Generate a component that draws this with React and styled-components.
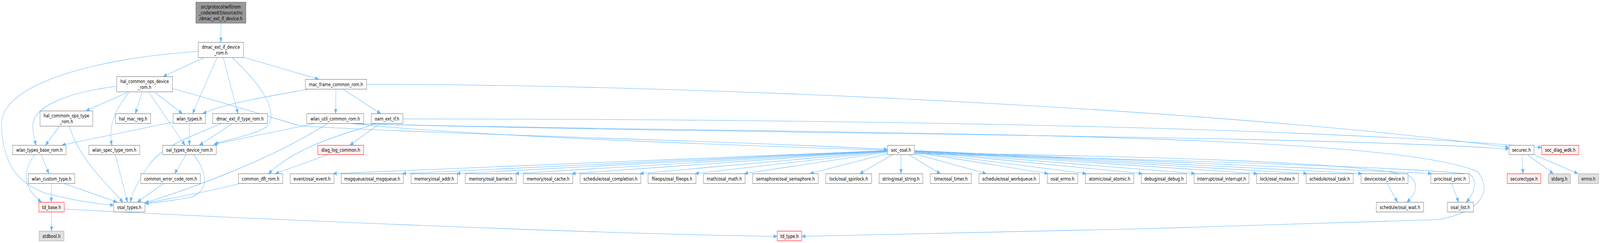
import React, { useEffect, useState } from 'react';
import styled, { createGlobalStyle } from 'styled-components';

const GRAPH_W = 5339;
const GRAPH_H = 623;

const GlobalStyle = createGlobalStyle`
    html, body {
        margin: 0;
        padding: 0;
        background: #ffffff;
        overflow: hidden;
    }
`;

// outer frame, sized to the viewport
const Frame = styled.div`
    position: relative;
    overflow: hidden;
    background: #ffffff;
`;

const Canvas = styled.div`
    position: relative;
    width: ${GRAPH_W}px;
    height: ${GRAPH_H}px;
    overflow: hidden;
    background: #ffffff;
    transform-origin: 0 0;
    font-family: "DejaVu Sans", "Liberation Sans", sans-serif;
`;

const Edges = styled.svg`
    position: absolute;
    left: 0;
    top: 0;
`;

const kinds = {
    root: { bg: '#999999', border: '#666666' },
    file: { bg: '#ffffff', border: '#666666' },
    missing: { bg: '#fff0f0', border: '#ff0000' },
    system: { bg: '#e0e0e0', border: '#999999' },
};

// graph node, placed on the dot canvas
const Node = styled.div`
    position: absolute;
    left: ${p => p.$x}px;
    top: ${p => p.$y}px;
    width: ${p => p.$w}px;
    height: ${p => p.$h}px;
    box-sizing: border-box;
    border: 1px solid ${p => kinds[p.$kind].border};
    background: ${p => kinds[p.$kind].bg};
    display: flex;
    flex-direction: column;
    align-items: center;
    justify-content: center;
    font-size: 13px;
    line-height: 15px;
    color: #000000;
    white-space: pre;
    text-align: center;
`;

const n = (x1, x2, y1, y2, label, kind = 'file') => ({ x: x1, y: y1, w: x2 - x1, h: y2 - y1, label, kind });
const row = (x1, x2, label, kind) => n(x1, x2, 445, 471, label, kind);

const nodes = {
    R: n(653, 821, 5, 60, 'src/protocol/wifi/rom\n_code/ws63/source/inc\n/dmac_ext_if_device.h', 'root'),
    DEV: n(661, 813, 108, 148, 'dmac_ext_if_device\n_rom.h'),
    HALDEV: n(389, 576, 196, 236, 'hal_common_ops_device\n_rom.h'),
    MAC: n(1018, 1224, 203, 229, 'mac_frame_common_rom.h'),
    HALTYPE: n(133, 310, 284, 324, 'hal_commom_ops_type\n_rom.h'),
    HALMAC: n(385, 503, 291, 317, 'hal_mac_reg.h'),
    WLANT: n(577, 686, 291, 317, 'wlan_types.h'),
    DMACT: n(709, 893, 291, 317, 'dmac_ext_if_type_rom.h'),
    WUTIL: n(1023, 1214, 291, 317, 'wlan_util_common_rom.h'),
    OAM: n(1238, 1345, 291, 317, 'oam_ext_if.h'),
    WBASE: n(42, 221, 372, 397, 'wlan_types_base_rom.h'),
    WSPEC: n(296, 467, 372, 397, 'wlan_spec_type_rom.h'),
    OALDEV: n(542, 722, 372, 397, 'oal_types_device_rom.h'),
    DIAG: n(1060, 1214, 372, 397, 'diag_log_common.h', 'missing'),
    SOC: n(2961, 3052, 372, 397, 'soc_osal.h'),
    SECUREC: n(5035, 5119, 372, 397, 'securec.h'),
    WDK: n(5144, 5269, 372, 397, 'soc_diag_wdk.h', 'missing'),
    WCUST: row(94, 250, 'wlan_custom_type.h'),
    CERR: row(469, 669, 'common_error_code_rom.h'),
    CDFT: row(795, 944, 'common_dft_rom.h'),
    event: row(968, 1115, 'event/osal_event.h'),
    msgqueue: row(1138, 1346, 'msgqueue/osal_msgqueue.h'),
    addr: row(1371, 1527, 'memory/osal_addr.h'),
    barrier: row(1552, 1723, 'memory/osal_barrier.h'),
    cache: row(1746, 1912, 'memory/osal_cache.h'),
    completion: row(1935, 2139, 'schedule/osal_completion.h'),
    fileops: row(2162, 2323, 'fileops/osal_fileops.h'),
    math: row(2347, 2487, 'math/osal_math.h'),
    semaphore: row(2511, 2731, 'semaphore/osal_semaphore.h'),
    spinlock: row(2755, 2909, 'lock/osal_spinlock.h'),
    string: row(2933, 3080, 'string/osal_string.h'),
    timer: row(3104, 3242, 'time/osal_timer.h'),
    workqueue: row(3266, 3469, 'schedule/osal_workqueue.h'),
    errno: row(3494, 3597, 'osal_errno.h'),
    atomic: row(3621, 3784, 'atomic/osal_atomic.h'),
    debug: row(3808, 3960, 'debug/osal_debug.h'),
    interrupt: row(3984, 4168, 'interrupt/osal_interrupt.h'),
    mutex: row(4192, 4333, 'lock/osal_mutex.h'),
    task: row(4358, 4516, 'schedule/osal_task.h'),
    device: row(4541, 4699, 'device/osal_device.h'),
    proc: row(4774, 4903, 'proc/osal_proc.h'),
    securectype: row(5029, 5142, 'securectype.h', 'missing'),
    stdarg: row(5166, 5241, 'stdarg.h', 'system'),
    errnoh: row(5266, 5335, 'errno.h', 'system'),
    TDBASE: n(129, 215, 518, 544, 'td_base.h', 'missing'),
    OSALT: n(379, 484, 518, 544, 'osal_types.h'),
    wait: n(4592, 4751, 518, 544, 'schedule/osal_wait.h'),
    list: n(4829, 4917, 518, 544, 'osal_list.h'),
    stdbool: n(130, 214, 592, 618, 'stdbool.h', 'system'),
    tdtype: n(2593, 2676, 592, 618, 'td_type.h', 'missing'),
};

// hand-routed edges: start point, then straight end or cubic segments
const routed = [
    [737, 60, 737, 108],
    [680, 148, 545, 196],
    [724, 148, 643, 291],
    [745, 148, 794, 291],
    [775, 148, 870, 215, 935, 290, 890, 325, 850, 345, 760, 358, 716, 369],
    [813, 147, 1063, 203],
    [661, 132, 300, 150, 0, 220, 5, 320, 8, 420, 60, 470, 150, 495, 250, 515, 330, 523, 379, 526],
    [425, 237, 287, 284],
    [474, 237, 452, 291],
    [517, 237, 608, 291],
    [497, 237, 617, 372],
    [389, 221, 200, 240, 100, 280, 110, 330, 112, 350, 116, 360, 120, 372],
    [430, 237, 380, 285, 362, 325, 373, 372],
    [576, 227, 800, 275, 900, 300, 1003, 323, 1500, 345, 2400, 360, 2961, 383],
    [1029, 229, 950, 240, 760, 262, 677, 291],
    [1121, 229, 1120, 291],
    [1145, 229, 1270, 291],
    [1224, 216, 2500, 218, 4200, 290, 5035, 378],
    [1345, 305, 2500, 305, 4200, 318, 5144, 378],
    [577, 313, 207, 372],
    [632, 317, 632, 372],
    [775, 317, 666, 372],
    [738, 317, 600, 360, 540, 380, 500, 420, 460, 465, 440, 495, 436, 518],
    [198, 324, 152, 372],
    [232, 324, 260, 400, 340, 460, 410, 518],
    [385, 397, 425, 518],
    [621, 397, 583, 445],
    [646, 397, 700, 450, 690, 490, 640, 505, 580, 515, 520, 519, 484, 522],
    [138, 397, 163, 445],
    [115, 397, 75, 440, 75, 480, 138, 518],
    [172, 471, 171, 518],
    [215, 471, 390, 518],
    [545, 471, 459, 518],
    [798, 471, 700, 490, 600, 505, 484, 521],
    [1093, 317, 900, 410, 650, 480, 484, 520],
    [1048, 317, 713, 370],
    [172, 544, 172, 592],
    [215, 536, 800, 560, 2000, 600, 2593, 606],
    [1253, 317, 1150, 345, 1000, 370, 896, 445],
    [1267, 317, 1168, 372],
    [1093, 397, 919, 445],
    [1176, 317, 1500, 345, 2400, 372, 2961, 385],
    [1176, 317, 2500, 345, 4300, 345, 5035, 382],
    [1176, 317, 2600, 345, 4600, 330, 4930, 440, 4975, 480, 4960, 540, 4800, 563, 4200, 580, 3200, 600, 2676, 606],
    [3052, 392, 3800, 400, 4550, 415, 4705, 452, 4740, 475, 4720, 500, 4695, 518],
    [3052, 394, 3900, 410, 4750, 430, 4905, 447, 4935, 465, 4915, 500, 4893, 518],
    [4629, 471, 4663, 518],
    [4844, 471, 4867, 518],
    [5079, 397, 5082, 445],
    [5098, 397, 5183, 445],
    [5114, 395, 5265, 445],
];

const fanTargets = [
    'event', 'msgqueue', 'addr', 'barrier', 'cache', 'completion', 'fileops', 'math',
    'semaphore', 'spinlock', 'string', 'timer', 'workqueue', 'errno', 'atomic', 'debug',
    'interrupt', 'mutex', 'task', 'device', 'proc',
];

// soc_osal.h fans out to every osal header in the row below
const fan = fanTargets.map(key => {
    const s = nodes.SOC;
    const t = nodes[key];
    const cx = s.x + s.w / 2;
    const cy = s.y + s.h / 2;
    const tx = t.x + t.w / 2;
    let ex = cx + (tx - cx) * 0.787;
    ex = Math.max(t.x + 3, Math.min(t.x + t.w - 3, ex));
    const ey = t.y;
    const dx = ex - cx;
    const dy = ey - cy;
    const k = Math.min(
        dx === 0 ? Infinity : (s.w / 2) / Math.abs(dx),
        (s.h / 2) / Math.abs(dy)
    );
    return [cx + dx * k, cy + dy * k, ex, ey];
});

const toPath = pts => {
    let d = `M${pts[0]},${pts[1]}`;
    if (pts.length === 4) return d + ` L${pts[2]},${pts[3]}`;
    for (let i = 2; i < pts.length; i += 6) {
        d += ` C${pts[i]},${pts[i + 1]} ${pts[i + 2]},${pts[i + 3]} ${pts[i + 4]},${pts[i + 5]}`;
    }
    return d;
};

const arrowHead = pts => {
    const l = pts.length;
    const tx = pts[l - 2];
    const ty = pts[l - 1];
    const px = pts[l - 4];
    const py = pts[l - 3];
    const len = Math.hypot(tx - px, ty - py) || 1;
    const ux = (tx - px) / len;
    const uy = (ty - py) / len;
    const bx = tx - ux * 11;
    const by = ty - uy * 11;
    const w = 4.5;
    return `${tx},${ty} ${bx - uy * w},${by + ux * w} ${bx + uy * w},${by - ux * w}`;
};

const Edge = ({ pts }) => (
    <g>
        <path d={toPath(pts)} fill="none" stroke="#63b8ff" strokeWidth="1.1" />
        <polygon points={arrowHead(pts)} fill="#63b8ff" stroke="#63b8ff" strokeWidth="1" />
    </g>
);

// the graph is drawn at its own size and fitted into whatever viewport we get
const fitScale = () => {
    if (typeof window === 'undefined') return { sx: 1, sy: 1 };
    return {
        sx: window.innerWidth / GRAPH_W,
        sy: window.innerHeight / GRAPH_H,
    };
};

const App = () => {
    const [scale, setScale] = useState(fitScale);

    useEffect(() => {
        const onResize = () => setScale(fitScale());
        window.addEventListener('resize', onResize);
        return () => window.removeEventListener('resize', onResize);
    }, []);

    return (
        <Frame style={{ width: GRAPH_W * scale.sx, height: GRAPH_H * scale.sy }}>
            <GlobalStyle />
            <Canvas style={{ transform: `scale(${scale.sx}, ${scale.sy})` }}>
                <Edges width={GRAPH_W} height={GRAPH_H} viewBox={`0 0 ${GRAPH_W} ${GRAPH_H}`}>
                    {[...routed, ...fan].map((pts, i) => <Edge key={i} pts={pts} />)}
                </Edges>
                {Object.entries(nodes).map(([key, nd]) => (
                    <Node key={key} $x={nd.x} $y={nd.y} $w={nd.w} $h={nd.h} $kind={nd.kind}>
                        {nd.label}
                    </Node>
                ))}
            </Canvas>
        </Frame>
    );
};

export default App;
